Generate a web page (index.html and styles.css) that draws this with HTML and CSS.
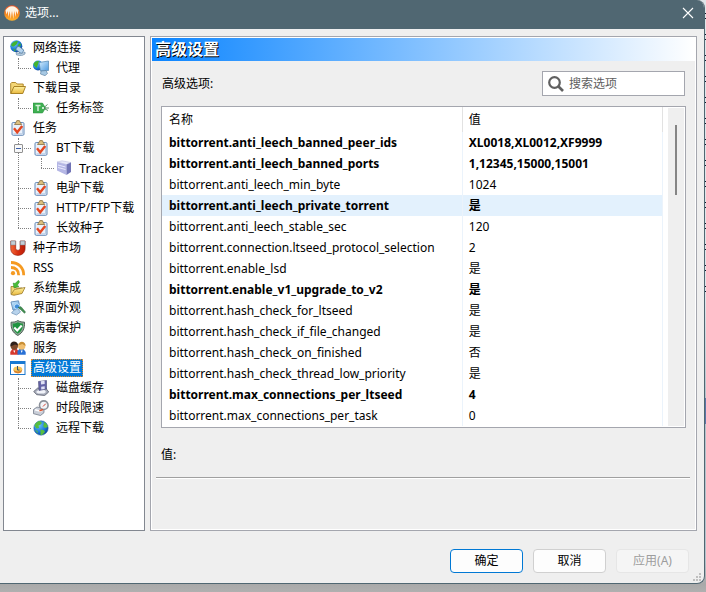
FILE: index.html
```html
<!DOCTYPE html>
<html lang="zh-CN">
<head>
<meta charset="utf-8">
<title>选项</title>
<link rel="stylesheet" href="styles.css">
</head>
<body>
<svg class="sprite" width="0" height="0" aria-hidden="true">
  <defs>
    <radialGradient id="g-globe" cx=".35" cy=".3" r=".8"><stop offset="0" stop-color="#6cc4f8"/><stop offset=".6" stop-color="#1a78d8"/><stop offset="1" stop-color="#0a3a90"/></radialGradient>
    <linearGradient id="g-folder" x2="0" y2="1"><stop offset="0" stop-color="#fdf0a0"/><stop offset="1" stop-color="#e9b83c"/></linearGradient>
    <linearGradient id="g-screen" x2="1" y2="1"><stop offset="0" stop-color="#d8f0ff"/><stop offset="1" stop-color="#4a98e0"/></linearGradient>
    <linearGradient id="g-red" x2="1"><stop offset="0" stop-color="#f46a3a"/><stop offset=".5" stop-color="#d83010"/><stop offset="1" stop-color="#b81c08"/></linearGradient>
    <linearGradient id="g-app" x2="0" y2="1"><stop offset="0" stop-color="#e8502a"/><stop offset=".5" stop-color="#f5821e"/><stop offset="1" stop-color="#ffb52e"/></linearGradient>
  </defs>
  <symbol id="i-app" viewBox="0 0 16 16"><circle cx="8" cy="8" r="7.8" fill="url(#g-app)"/><path d="M1.500 5.500C3 3 5 1.300 8 1.300s5 1.700 6.500 4.200l-1 4-1.200-3.500-.8 6L10.200 6l-.9 8L8 6l-1.300 8L5.800 6l-1.300 6-.8-6-1.200 3.500Z" fill="#fff4e2"/></symbol>
  <symbol id="i-net" viewBox="0 0 16 16"><circle cx="6.300" cy="6.300" r="6" fill="url(#g-globe)"/><path d="M1 5C2.500 1.500 6 .5 8 1 7 3 7 4.500 5 5.500 4 7 2.500 7 1 5ZM7.500 5.500 10 3l1 2-2 2.500ZM3 8.500l2.500 1L5 12Z" fill="#43b430"/><rect x="6.500" y="7.500" width="7.500" height="4.500" rx="1.500" transform="rotate(35 10 9)" fill="#b4d3ee" stroke="#47759e" stroke-width=".8"/><path d="M6 12.500 11 14l4-2v2l-3.500 1.700-5-.8Z" fill="#c3d9ea" stroke="#55789a" stroke-width=".6"/></symbol>
  <symbol id="i-proxy" viewBox="0 0 16 16"><circle cx="5" cy="5.500" r="5" fill="url(#g-globe)"/><path d="M.5 5c0-3 3-4.500 5.500-4L5 4.500 3.500 8Z" fill="#43b430"/><path d="M6 2.500 15.500 1v9.500L7.500 11Z" fill="url(#g-screen)" stroke="#5d8fb8" stroke-width=".8"/><path d="m8 11 5-.5 1.500 3-2.500 2.200L7.500 14Z" fill="#a7c9e4" stroke="#54799a" stroke-width=".6"/></symbol>
  <symbol id="i-folder" viewBox="0 0 16 16"><path d="M.7 13.500v-10l1-1h4l1.500 1.500h6v3" fill="#f4d676" stroke="#a98020" stroke-width=".9"/><path d="M.8 13.500 4 6.500h11.500L12.800 13.500Z" fill="url(#g-folder)" stroke="#a07818" stroke-width=".9"/></symbol>
  <symbol id="i-tag" viewBox="0 0 16 16"><path d="M0 3h9.500L12.500 8l-3 5H0Z" fill="#3fb052" stroke="#218a38" stroke-width=".5"/><path d="M2.500 5.500h5M5 5.500v5.500" stroke="#d5f2d8" stroke-width="1.500"/><circle cx="10" cy="8" r="1" fill="#fff"/><path d="M11 7.500l3.500-3M11 8.500l4 2M12 8h4" stroke="#458451" fill="none" stroke-width=".9"/></symbol>
  <symbol id="i-task" viewBox="0 0 16 16"><rect x="2" y="2.500" width="12" height="12.800" rx="1.200" fill="#e9f1fb" stroke="#6589b7"/><path d="M3.500 13.800h9V6" fill="none" stroke="#b7cbe4"/><path d="M4.500 4.500 6 2.300 6.800.6h2.600l.8 1.700 1.500 2.200Z" fill="#dcc080" stroke="#806331" stroke-width=".7"/><path d="m4 8.300 3.200 4 5-6.300" stroke="#e44722" stroke-width="2.400" fill="none"/></symbol>
  <symbol id="i-tracker" viewBox="0 0 16 16"><path d="M1 2 6 .8l9 1.700-4.500 2Z" fill="#e9eafa" stroke="#a4a7d2" stroke-width=".4"/><path d="M1 2l9.500 2.500V15L1 10.500Z" fill="#b5b7e5"/><path d="m10.500 4.500 4.500-2V12l-4.500 3Z" fill="#7174b6"/><path d="m2 5 7.500 2M2 7.500l7.500 2" stroke="#e9eaff"/></symbol>
  <symbol id="i-magnet" viewBox="0 0 16 16"><path d="M.7 1h5v7.200c0 2.700 4.400 2.700 4.400 0V1h5v7.500c0 9.200-14.400 9.200-14.400 0Z" fill="url(#g-red)" stroke="#8d1808" stroke-width=".6"/><path d="M.9 1h4.600v4H.9ZM10.300 1h4.600v4h-4.600Z" fill="#c3ced6" stroke="#71818e" stroke-width=".5"/></symbol>
  <symbol id="i-rss" viewBox="0 0 16 16"><g fill="none" stroke="#f59a22" stroke-width="2.800"><path d="M1 2.500c7.500 0 12.700 5.200 12.700 12.700M1 7.500c4.700 0 7.700 3 7.700 7.700"/></g><circle cx="3" cy="13.200" r="2.100" fill="#f59a22"/></symbol>
  <symbol id="i-integrate" viewBox="0 0 16 16"><path d="M1 14V6.500h3.500L6 8h6v2" fill="#f2d77a" stroke="#9a7a28" stroke-width=".8"/><path d="m1 14.500 3.500-5L15 7.500l-3 6-8 1.800Z" fill="url(#g-folder)" stroke="#9a7a28" stroke-width=".8"/><path d="M8.500.3 5 3.500 3.200 3 4 8l5-1.500-1.700-1.300L9.500 2Z" fill="#48bc38" stroke="#278824" stroke-width=".5"/></symbol>
  <symbol id="i-look" viewBox="0 0 16 16"><path d="M1 2 8.500.8l1.700 8L3 10Z" fill="url(#g-screen)" stroke="#6a93bd"/><path d="m4 10 4-1 2.500 3-4 3-5-2Z" fill="#b8d3ec" stroke="#6a8fb5" stroke-width=".7"/><circle cx="7" cy="6.500" r="2.700" fill="#3f8fdc" stroke="#d6ecfb" stroke-width=".9"/><path d="m8 7.500 3-.8 4.500 5.300-1 1.300L10 9Z" fill="#429150" stroke="#28633a" stroke-width=".5"/></symbol>
  <symbol id="i-shield" viewBox="0 0 16 16"><path d="M7.800.5C10 2 12.500 2 14.500 2.200c.3 6-1.300 10.300-6.700 13.300C2.300 12.500.8 8 1.100 2.200 3.500 2.200 6 2 7.800.5Z" fill="#93a799" stroke="#40564a" stroke-width=".9"/><path d="M7.800 2.200c1.900 1 3.500 1.200 5.100 1.300.1 5-1.300 7.900-5.100 10.300C4 11.400 2.600 8.500 2.700 3.500 5 3.400 6.500 3 7.800 2.200Z" fill="#1f9440"/><path d="m4.300 7.500 2.900 3 4.500-5" stroke="#fff" stroke-width="2" fill="none"/></symbol>
  <symbol id="i-people" viewBox="0 0 16 16"><path d="M.3 14.700V12l2-3h4.500l1.700 2v3.700Z" fill="#d6382e"/><path d="M7.500 14.700V11l2-2h4l2.200 3v2.700Z" fill="#2870d5"/><circle cx="4.300" cy="6" r="3.700" fill="#7d4a2c"/><circle cx="11.700" cy="6" r="3.700" fill="#f1bf70"/><path d="M.5 6.500C-.7-.2 8 .3 8 5.500L5 4.500Z" fill="#2f211b"/><path d="M8.300 5.500c.7-5.200 7-4.700 7.300.5l-3.300-2Z" fill="#c88f36"/><path d="m3.300 10.500 1 2.500 1-2.500M10.700 10.500l1 2.500 1-2.500" fill="#fff"/></symbol>
  <symbol id="i-advanced" viewBox="0 0 16 16"><rect x=".5" y="1.500" width="14.500" height="13" fill="#fff" stroke="#1b76cb"/><path d="M.5 1h14.500v3H.5Z" fill="#1979d2"/><ellipse cx="7.800" cy="9.500" rx="4.500" ry="3" fill="#f7c65a"/><path d="M3.500 9.700c2 2.300 6.500 2.300 8.600 0l-.8 2.800-3.300 1-3.500-1Z" fill="#d9822b"/><path d="M7.500 6v4h2" stroke="#394f67" fill="none"/></symbol>
  <symbol id="i-disk" viewBox="0 0 16 16"><path d="m.7 11.500 4-3.500h8l3 4-4 3.500-8-.8Z" fill="#a5aab8" stroke="#4d5261" stroke-width=".7"/><path d="m3 12 3-2.500h5l2 2.500-2 1.500H5Z" fill="#f1f3f9"/><path d="m5.500 1.500 8-1V9l-7.500 1.500Z" fill="#6463a6" stroke="#454676" stroke-width=".6"/><path d="m7.800 1.300.2 3.200 3.700-.5-.1-3.200ZM8.200 9.500V6.700l3.500-.5V9Z" fill="#e0e1f5"/></symbol>
  <symbol id="i-time" viewBox="0 0 16 16"><path d="M.5 9.500 4 7l7 1.500v4.200l-3.500 2.800-7-1.800Z" fill="#c9ced8" stroke="#666f7e" stroke-width=".7"/><path d="m2 9.700 5.500 1.500 2-1.500" stroke="#fff" stroke-width="1.500" fill="none"/><circle cx="10.800" cy="5.200" r="4.300" fill="#f3f5f8" stroke="#8a9099" stroke-width="1.600"/><path d="m10 6.500 2.800-2.800" stroke="#d34231"/><path d="m6.500 10.800 3.500-1.300" stroke="#d9532f" stroke-width="1.500"/></symbol>
  <symbol id="i-globe" viewBox="0 0 16 16"><circle cx="8" cy="8" r="7.200" fill="url(#g-globe)" stroke="#165b9e" stroke-width=".5"/><path d="M1.500 5.500c1-3 3.500-4.500 5.500-4.500L9 3 7 5 5.500 5.500 6 8 3.500 8.500ZM10.500 1.800c2.500 1 4 2.700 4.200 5.200L12 8l-2-2 1-2ZM7.500 9.500l3.500.8L12 12l-3 3H7.500ZM2 10l2.500 1 .5 2.500Z" fill="#57be40"/></symbol>
</svg>

<main class="window">
  <header class="titlebar">
    <svg class="icon"><use href="#i-app"/></svg>
    <h1 class="titlebar-text">选项...</h1>
    <button class="close" type="button" aria-label="关闭"><svg class="close-icon" viewBox="0 0 12 12"><path d="m1 1 10 10M11 1 1 11" stroke="#fff" stroke-width="1.100"/></svg></button>
  </header>

  <div class="content">
    <nav class="tree" aria-label="选项">
      <ul class="tree-list">
        <li><a class="node" href="#"><svg class="icon"><use href="#i-net"/></svg><span class="label">网络连接</span></a>
          <ul><li><a class="node" href="#"><svg class="icon"><use href="#i-proxy"/></svg><span class="label">代理</span></a></li></ul></li>
        <li><a class="node" href="#"><svg class="icon"><use href="#i-folder"/></svg><span class="label">下载目录</span></a>
          <ul><li><a class="node" href="#"><svg class="icon"><use href="#i-tag"/></svg><span class="label">任务标签</span></a></li></ul></li>
        <li><a class="node" href="#"><svg class="icon"><use href="#i-task"/></svg><span class="label">任务</span></a>
          <ul>
            <li><button class="expander" type="button" aria-label="折叠"></button><a class="node" href="#"><svg class="icon"><use href="#i-task"/></svg><span class="label">BT下载</span></a>
              <ul><li><a class="node" href="#"><svg class="icon"><use href="#i-tracker"/></svg><span class="label latin">Tracker</span></a></li></ul></li>
            <li><a class="node" href="#"><svg class="icon"><use href="#i-task"/></svg><span class="label">电驴下载</span></a></li>
            <li><a class="node" href="#"><svg class="icon"><use href="#i-task"/></svg><span class="label">HTTP/FTP下载</span></a></li>
            <li><a class="node" href="#"><svg class="icon"><use href="#i-task"/></svg><span class="label">长效种子</span></a></li>
          </ul></li>
        <li><a class="node" href="#"><svg class="icon"><use href="#i-magnet"/></svg><span class="label">种子市场</span></a></li>
        <li><a class="node" href="#"><svg class="icon"><use href="#i-rss"/></svg><span class="label">RSS</span></a></li>
        <li><a class="node" href="#"><svg class="icon"><use href="#i-integrate"/></svg><span class="label">系统集成</span></a></li>
        <li><a class="node" href="#"><svg class="icon"><use href="#i-look"/></svg><span class="label">界面外观</span></a></li>
        <li><a class="node" href="#"><svg class="icon"><use href="#i-shield"/></svg><span class="label">病毒保护</span></a></li>
        <li><a class="node" href="#"><svg class="icon"><use href="#i-people"/></svg><span class="label">服务</span></a></li>
        <li><a class="node" href="#" aria-current="page"><svg class="icon"><use href="#i-advanced"/></svg><span class="label selected">高级设置</span></a>
          <ul>
            <li><a class="node" href="#"><svg class="icon"><use href="#i-disk"/></svg><span class="label">磁盘缓存</span></a></li>
            <li><a class="node" href="#"><svg class="icon"><use href="#i-time"/></svg><span class="label">时段限速</span></a></li>
            <li><a class="node" href="#"><svg class="icon"><use href="#i-globe"/></svg><span class="label">远程下载</span></a></li>
          </ul></li>
      </ul>
    </nav>

    <section class="panel">
      <h2 class="banner">高级设置</h2>
      <div class="toolbar">
        <label for="search">高级选项:</label>
        <div class="search">
          <svg class="search-icon" viewBox="0 0 16 16"><circle cx="6.500" cy="6.500" r="5.300" fill="none" stroke="#606060" stroke-width="2.200"/><path d="m10.500 10.500 4.500 4.500" stroke="#606060" stroke-width="2.600"/></svg>
          <input id="search" type="text" placeholder="搜索选项">
        </div>
      </div>
      <div class="list">
        <table class="options">
          <thead><tr><th class="name">名称</th><th>值</th></tr></thead>
          <tbody>
            <tr class="changed"><td>bittorrent.anti_leech_banned_peer_ids</td><td>XL0018,XL0012,XF9999</td></tr>
            <tr class="changed"><td>bittorrent.anti_leech_banned_ports</td><td>1,12345,15000,15001</td></tr>
            <tr><td>bittorrent.anti_leech_min_byte</td><td>1024</td></tr>
            <tr class="changed current"><td>bittorrent.anti_leech_private_torrent</td><td>是</td></tr>
            <tr><td>bittorrent.anti_leech_stable_sec</td><td>120</td></tr>
            <tr><td>bittorrent.connection.ltseed_protocol_selection</td><td>2</td></tr>
            <tr><td>bittorrent.enable_lsd</td><td>是</td></tr>
            <tr class="changed"><td>bittorrent.enable_v1_upgrade_to_v2</td><td>是</td></tr>
            <tr><td>bittorrent.hash_check_for_ltseed</td><td>是</td></tr>
            <tr><td>bittorrent.hash_check_if_file_changed</td><td>是</td></tr>
            <tr><td>bittorrent.hash_check_on_finished</td><td>否</td></tr>
            <tr><td>bittorrent.hash_check_thread_low_priority</td><td>是</td></tr>
            <tr class="changed"><td>bittorrent.max_connections_per_ltseed</td><td>4</td></tr>
            <tr><td>bittorrent.max_connections_per_task</td><td>0</td></tr>
          </tbody>
        </table>
        <div class="scrollbar"><div class="thumb"></div></div>
      </div>
      <p class="value-label">值:</p>
      <hr class="rule">
    </section>
  </div>

  <footer class="actions">
    <button class="btn primary" type="button">确定</button>
    <button class="btn" type="button">取消</button>
    <button class="btn" type="button" disabled>应用(A)</button>
  </footer>
  <svg class="grip" viewBox="0 0 8 8" aria-hidden="true"><path d="M6 0h2v2H6ZM3 3h2v2H3ZM6 3h2v2H6ZM0 6h2v2H0ZM3 6h2v2H3ZM6 6h2v2H6Z" fill="#bfbfbf"/></svg>
</main>
</body>
</html>
```
FILE: styles.css
```css
* { box-sizing: border-box; }

body {
  margin: 0;
  min-height: 100vh;
  padding-right: 1px;
  background:
    repeating-linear-gradient(transparent 0 13px, #10182c 13px 14px, transparent 14px 18px, #10182c 18px 19px, transparent 19px 21px) right top / 1px 300px no-repeat,
    linear-gradient(#5b76a8, #5b76a8) right 398px / 1px 26px no-repeat,
    linear-gradient(#dfe5e9 0 300px, #b4c4cc 400px 560px, #a9a9a9 584px, #b0b0b0);
  color: #000;
  font: 12px/20px "Noto Sans", "Noto Sans CJK SC", sans-serif;
}

h1, h2, p, ul { margin: 0; padding: 0; font-weight: normal; }
ul { list-style: none; }
a { color: inherit; text-decoration: none; }
button, input { font: inherit; color: inherit; }

.sprite { position: absolute; }
.icon { width: 16px; height: 16px; flex: none; }

.window {
  position: relative;
  background: #efefef;
  border: solid #506772;
  border-width: 0 1px 1px 0;
  border-radius: 0 8px 8px 0;
  overflow: hidden;
}

.titlebar {
  display: flex;
  align-items: center;
  gap: 5px;
  height: 29px;
  padding: 0 8px 3px 4px;
  background: #506772;
  color: #fff;
}
.titlebar-text { flex: 1; font-size: 12px; }
.close { display: flex; padding: 2px; border: 0; background: none; }
.close-icon { width: 12px; height: 12px; }

.content {
  display: grid;
  grid-template-columns: 142px 1fr;
  gap: 5px;
  padding: 7px 7px 0 3px;
}

.tree { padding: 1px 6px; border: 1px solid #828790; background: #fff; }
.tree li { position: relative; }
.tree li ul { padding-left: 23px; }
.node { display: flex; align-items: center; gap: 5px; height: 20px; }
.label { padding: 0 2px; line-height: 18px; white-space: nowrap; }
.latin { font-size: 13px; }
.selected { background: #0078d7; color: #fff; outline: 1px dotted #e88a2a; outline-offset: -1px; }

/* dotted branch lines */
.tree li ul > li::before {
  content: "";
  position: absolute;
  left: -15px;
  top: 0;
  height: 100%;
  border-left: 1px dotted #808080;
}
.tree li ul > li:last-child::before { height: 10px; }
.tree li ul > li::after {
  content: "";
  position: absolute;
  left: -15px;
  top: 10px;
  width: 13px;
  border-top: 1px dotted #808080;
}
.expander {
  position: absolute;
  left: -19px;
  top: 6px;
  z-index: 1;
  width: 9px;
  height: 9px;
  padding: 0;
  border: 1px solid #919191;
  border-radius: 1px;
  background: linear-gradient(#3c5fa8, #3c5fa8) center / 5px 1px no-repeat #f8f8f8;
}

.panel {
  min-height: 495px;
  padding: 1px;
  border: 1px solid #a4a6ae;
  box-shadow: inset 0 0 0 1px #fff;
}
.banner {
  height: 23px;
  padding-left: 3px;
  background: linear-gradient(90deg, #0a84ff, #fff);
  color: #fff;
  font-size: 16px;
  font-weight: bold;
  line-height: 23px;
  text-shadow: 1px 1px 0 #000;
}
.toolbar {
  display: flex;
  align-items: center;
  justify-content: space-between;
  padding: 10px;
}
.search {
  display: flex;
  align-items: center;
  gap: 5px;
  width: 143px;
  height: 25px;
  padding: 0 5px;
  border: 1px solid #a4a6ae;
  background: #fff;
}
.search-icon { width: 16px; height: 16px; flex: none; }
.search input { width: 100%; min-width: 0; padding: 0; border: 0; background: none; outline: 0; }
.search input::placeholder { color: #606060; opacity: 1; }

.list {
  display: flex;
  gap: 5px;
  margin: 0 9px;
  padding: 0 1px 1px 0;
  border: 1px solid #a4a6ae;
  background: #fff;
}
.options { flex: 1; border-collapse: collapse; table-layout: fixed; }
.options th, .options td { height: 21px; padding: 0 6px; border-right: 1px solid #ebf3fb; line-height: 20px; text-align: left; white-space: nowrap; }
.options th { height: 25px; border-color: #e2e2e2; font-weight: normal; }
.options th:first-child, .options td:first-child { padding-left: 7px; }
.options .name { width: 60%; }
.options .changed { font-weight: bold; }
.current { background: #e3f1fd; }
.scrollbar { width: 16px; margin-top: 1px; padding-top: 17px; background: #efefef; }
.thumb { width: 2px; height: 70px; margin: 0 auto; background: #858585; }

.value-label { padding: 17px 9px 12px; }
.rule { margin: 0 5px 0 4px; border: solid; border-width: 1px 0; border-color: #a0a0a0 #fff #fff; }

.actions { display: flex; justify-content: flex-end; gap: 10px; padding: 18px 15px 10px; }
.btn {
  width: 73px;
  height: 24px;
  padding: 0;
  border: 1px solid #d0d0d0;
  border-radius: 4px;
  background: #fdfdfd;
}
.btn.primary { border-color: #0078d4; }
.btn:disabled { border-color: #e6e6e6; background: #f5f5f5; color: #9d9d9d; }
.grip { position: absolute; right: 3px; bottom: 2px; width: 8px; height: 8px; }
```
